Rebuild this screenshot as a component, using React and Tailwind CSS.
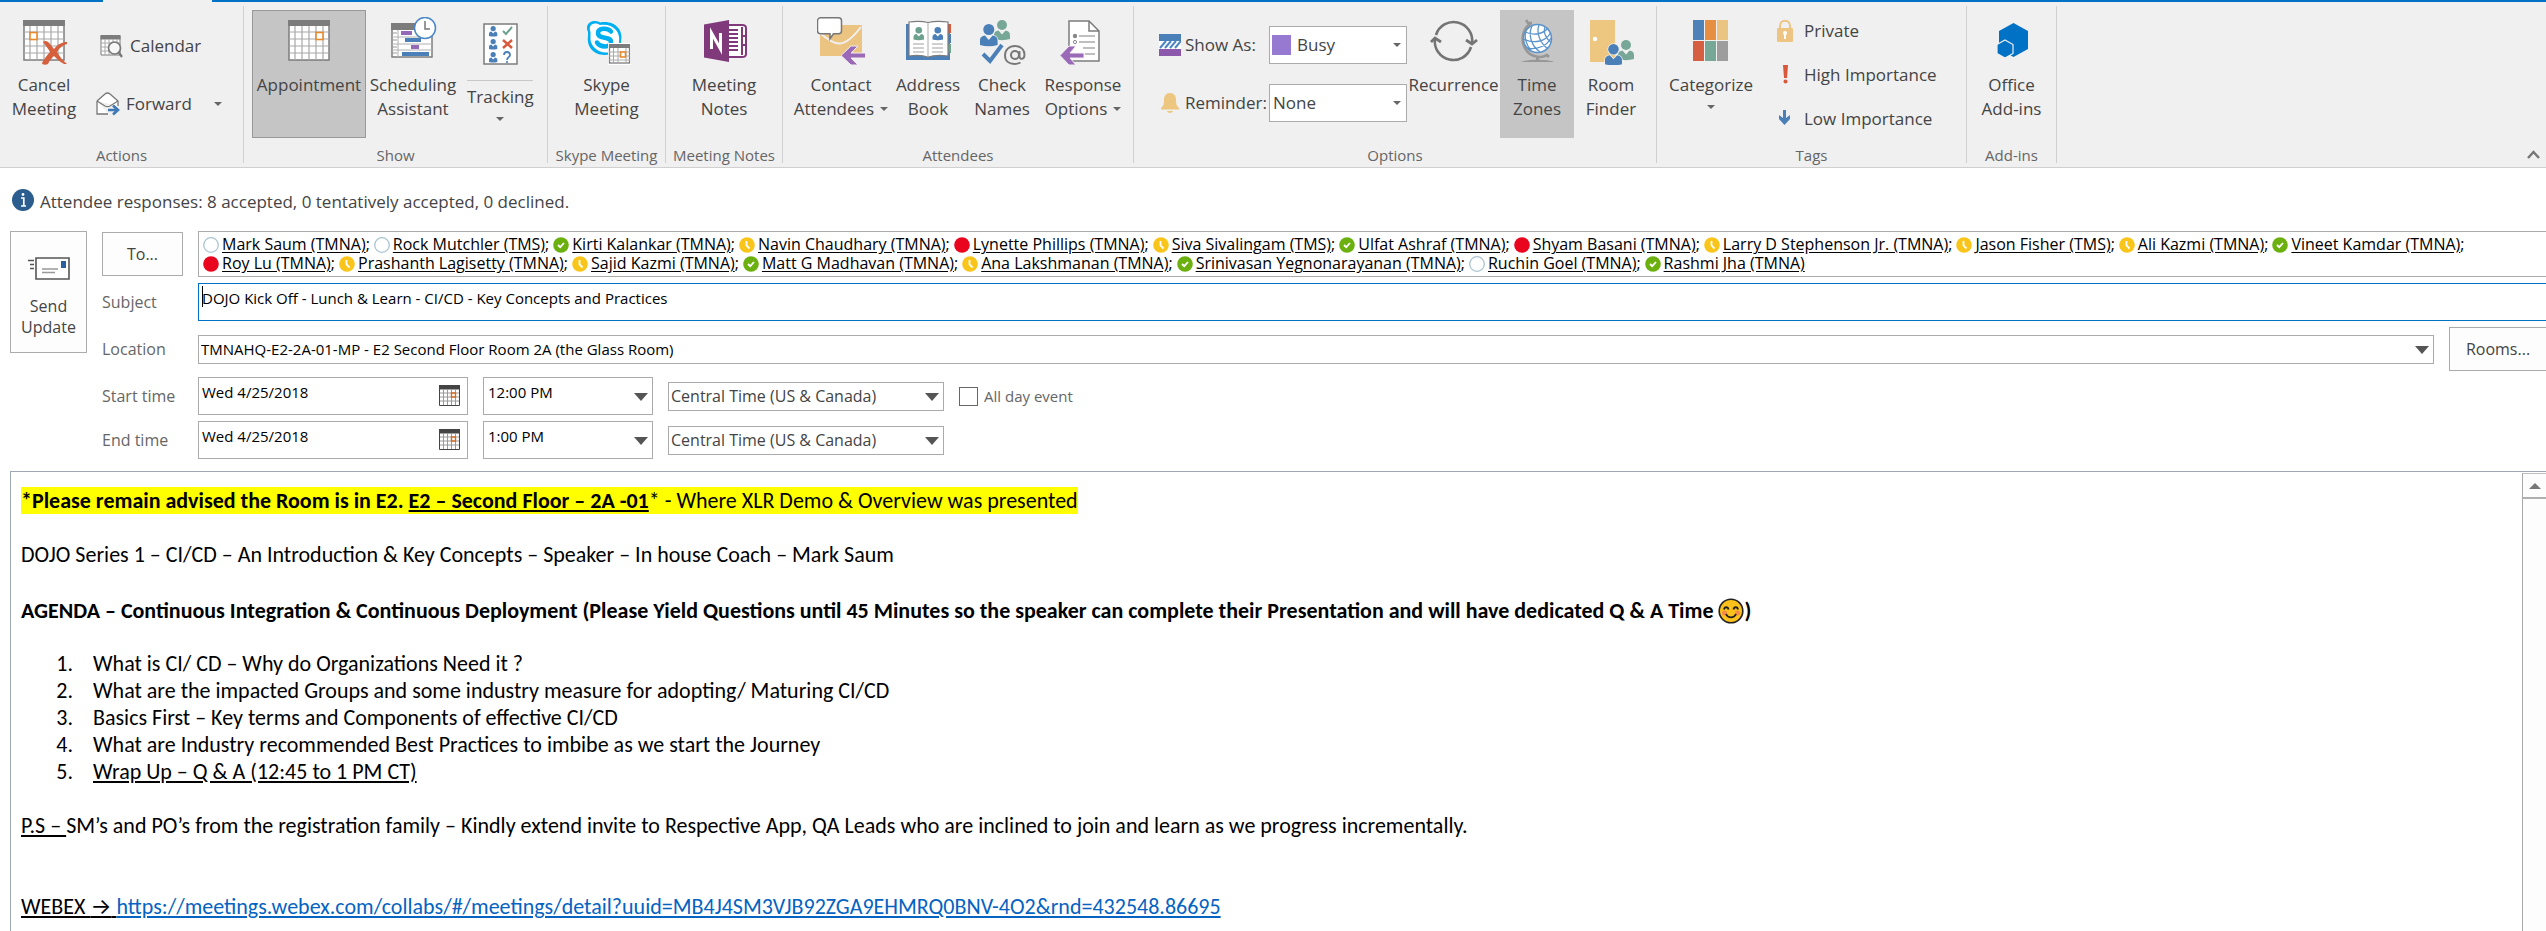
import React from "react";

const BIG = "h-12 w-12 shrink-0";

function Caret({ className = "" }) {
  return (
    <svg className={`h-1 w-2 shrink-0 ${className}`} viewBox="0 0 8 4" aria-hidden="true">
      <path d="M0 0h8L4 4z" fill="#666" />
    </svg>
  );
}

function Triangle({ className = "" }) {
  return (
    <svg className={`h-2 w-[14px] shrink-0 ${className}`} viewBox="0 0 14 8" aria-hidden="true">
      <path d="M0 0h14L7 8z" fill="#555" />
    </svg>
  );
}

function GridCalendar({ x, y, markX }) {
  return (
    <g>
      <rect x={x + 1} y={y + 1} width="40" height="39" fill="#fff" stroke="#7c7c7c" strokeWidth="1.5" />
      <rect x={x} y={y} width="42" height="6" fill="#7c7c7c" />
      <path
        d={`M${x + 7} ${y + 6}v34M${x + 14} ${y + 6}v34M${x + 21} ${y + 6}v34M${x + 28} ${y + 6}v34M${x + 35} ${y + 6}v34M${x + 1} ${y + 12}h40M${x + 1} ${y + 19}h40M${x + 1} ${y + 26}h40M${x + 1} ${y + 33}h40`}
        stroke="#a8a8a8"
        strokeWidth="1.2"
      />
      <rect x={x + markX} y={y + 12.5} width="7" height="7" fill="#fff" stroke="#e68a2e" strokeWidth="1.6" />
    </g>
  );
}

function Person({ x, y, s = 1, fill, halo }) {
  return (
    <g transform={`translate(${x} ${y}) scale(${s})`} fill={fill} stroke={halo || "none"} strokeWidth={halo ? 1.4 : 0} paintOrder="stroke">
      <circle cx="8" cy="5" r="5" />
      <path d="M0 19v-4c0-3 2-4 4.500-4.500L8 14.500l3.500-4C14 11 16 12 16 15v4c-5 1.500-11 1.500-16 0z" />
    </g>
  );
}

const CancelIcon = () => (
  <svg className={BIG} viewBox="0 0 48 48" aria-hidden="true">
    <GridCalendar x={3} y={3} markX={7} />
    <path d="M23 25c2-2 5-1 7 2l4 5c4-5 8-7 13-7v2c-4 1-8 4-10 8 3 5 6 9 10 12h-3c-4-2-7-5-10-8-3 3-5 5-6 8-2 1-6 1-6-1 2-4 5-8 8-11-2-4-5-7-7-10z" fill="#d65f3e" />
  </svg>
);
const AppointmentIcon = () => (
  <svg className={BIG} viewBox="0 0 48 48" aria-hidden="true">
    <GridCalendar x={3} y={3} markX={28} />
  </svg>
);
const SchedulingIcon = () => (
  <svg className={BIG} viewBox="0 0 48 48" aria-hidden="true">
    <rect x="3" y="7" width="40" height="33" fill="#fff" stroke="#7c7c7c" strokeWidth="1.500" />
    <rect x="2" y="6" width="24" height="7" fill="#7c7c7c" />
    <path d="M9 13v27M3 20h40M3 27h40M3 33h40" stroke="#b0b0b0" />
    <path d="M4 16h4M4 23h4M4 30h4M4 36h4" stroke="#999" />
    <rect x="12" y="14" width="11" height="4" fill="#9668b8" />
    <rect x="16" y="21" width="16" height="4" fill="#4a7fb8" />
    <rect x="22" y="28" width="8" height="4" fill="#9668b8" />
    <rect x="13" y="35" width="27" height="4" fill="#4a7fb8" />
    <circle cx="36" cy="11" r="10.500" fill="#fff" stroke="#4a85c4" strokeWidth="1.500" />
    <path d="M36 4v8h5" fill="none" stroke="#777" strokeWidth="1.500" />
  </svg>
);
const TrackingIcon = () => (
  <svg className={BIG} viewBox="0 0 48 48" aria-hidden="true">
    <rect x="8" y="7" width="33" height="40" fill="#fff" stroke="#7c7c7c" strokeWidth="1.500" />
    {[9, 22, 35].map((y) => (
      <Person key={y} x={13} y={y} s={0.52} fill="#4a7fb8" />
    ))}
    <path d="M27 14l3 3 6-7" fill="none" stroke="#6ba18d" strokeWidth="2" />
    <path d="M27 23l9 8M36 23l-9 8" stroke="#d9573a" strokeWidth="2.400" />
    <path d="M28 38c0-4 6-4 6 0 0 2-3 2.500-3 5" fill="none" stroke="#4a7fb8" strokeWidth="1.800" />
    <circle cx="31" cy="45" r="1.100" fill="#4a7fb8" />
  </svg>
);
const SkypeIcon = () => (
  <svg className={BIG} viewBox="0 0 48 48" aria-hidden="true">
    <path d="M5 15C2 9 6 4 11 4c3 0 5 .5 6 1.500C31 3 41 12 38 25c3 7-3 15-10 12C14 41 3 32 5 19z" fill="#00aff0" />
    <path d="M7.500 15C5.500 10 8 6.500 12 6.500c2 0 4 .6 5 1.500C29 6 38 14 36 25c2 5-2 11-8 10C16 38 6 29 7.500 19z" fill="#fff" />
    <path d="M28 14.500c-3-4-13-4-13 1.500 0 7 13 2.500 13 9 0 6-11 5.500-14 .5" fill="none" stroke="#00aff0" strokeWidth="4.500" strokeLinecap="round" />
    <rect x="25" y="26" width="23" height="22" fill="#fff" />
    <rect x="26.500" y="28" width="20" height="18" fill="#fff" stroke="#7c7c7c" strokeWidth="1.300" />
    <rect x="26" y="27" width="21" height="4" fill="#7c7c7c" />
    <path d="M30.500 31v15M35 31v15M43 31v15M26 35h21M26 39h21M26 43h21" stroke="#aaa" />
    <rect x="37.500" y="35" width="5" height="5" fill="#fff" stroke="#e68a2e" strokeWidth="1.600" />
  </svg>
);
const OneNoteIcon = () => (
  <svg className={BIG} viewBox="0 0 48 48" aria-hidden="true">
    <path d="M26 8h16c3 0 4 1 4 3v26c0 2-1 3-4 3H26z" fill="#fff" stroke="#80397b" strokeWidth="2" />
    <path d="M42 10v28M42 19h4M42 28h4" stroke="#80397b" strokeWidth="2" />
    <path d="M29 13h9M29 17h9M29 21h9M29 25h9M29 29h9M29 33h9" stroke="#80397b" strokeWidth="1.800" />
    <path d="M4 7.500L29 3v42L4 40.500z" fill="#80397b" />
    <path d="M11.500 32V16l9 16V16" fill="none" stroke="#fff" strokeWidth="3" />
  </svg>
);
const ContactIcon = () => (
  <svg className={BIG} viewBox="0 0 48 48" aria-hidden="true">
    <rect x="3" y="8" width="42" height="31" fill="#ebc482" />
    <path d="M3 16c16 14 24 16 41-6" fill="none" stroke="#f0f0f0" strokeWidth="2" />
    <path d="M3 .800h18c2 0 3 1.500 3 3v10c0 2-1.500 3-3 3h-5l-3.500 5V16.800H3c-1.500 0-3-1-3-3v-10c0-1.500 1.500-3 3-3z" transform="translate(.5 0)" fill="#fff" stroke="#777" strokeWidth="1.500" />
    <path d="M24 38.500L34 29h7l-7 7h15v5H34l7 7h-7z" fill="#9a6ab8" stroke="#f0f0f0" strokeWidth="1" />
  </svg>
);
const AddressIcon = () => (
  <svg className={BIG} viewBox="0 0 48 48" aria-hidden="true">
    <path d="M2 7h44v36H2z" fill="#4a7fb8" />
    <path d="M43 7h4v9h-4z" fill="#d9573a" />
    <path d="M43 17h4v9h-4z" fill="#4a7fb8" />
    <path d="M43 27h4v9h-4z" fill="#6ba18d" />
    <path d="M5 5c7-1 13-1 19 .5C30 4 37 4 44 5v34c-7-1-14-1-20 1-6-2-12-2-19-1z" fill="#fff" stroke="#7c7c7c" strokeWidth="1.200" />
    <path d="M24 6v34" stroke="#aaa" />
    <Person x={9.500} y={10} s={0.66} fill="#6ba18d" />
    <Person x={28.500} y={10} s={0.66} fill="#4a7fb8" />
    <path d="M9 27h11M9 31h11M9 35h11M28 27h11M28 31h11M28 35h11" stroke="#a0a0a0" strokeWidth="1.200" />
  </svg>
);
const CheckNamesIcon = () => (
  <svg className={BIG} viewBox="0 0 48 48" aria-hidden="true">
    <Person x={16} y={3} fill="#77a797" />
    <Person x={2} y={7} s={1.100} fill="#4a7fb8" halo="#f0f0f0" />
    <path d="M5 37l7 7 12-16" fill="none" stroke="#4a7fb8" strokeWidth="4" />
    <circle cx="37" cy="38" r="4" fill="none" stroke="#777" strokeWidth="2" />
    <path d="M41.500 34v5c0 4 5 4 5-1.500 0-5-4-8.500-9.500-8.500-6 0-10 4-10 9.500s4 8.500 9.500 8.500c2.500 0 4-.5 6-1.500" fill="none" stroke="#777" strokeWidth="1.900" />
  </svg>
);
const ResponseIcon = () => (
  <svg className={BIG} viewBox="0 0 48 48" aria-hidden="true">
    <path d="M10 4h20l10 10v30H10z" fill="#fff" stroke="#7c7c7c" strokeWidth="1.500" />
    <path d="M30 4v10h10" fill="none" stroke="#7c7c7c" strokeWidth="1.500" />
    <circle cx="16" cy="19" r="2.200" fill="#888" />
    <circle cx="16" cy="25" r="1.600" fill="none" stroke="#888" />
    <path d="M20 19h16M20 25h16M24 31h12M26 37h10" stroke="#aaa" strokeWidth="1.300" />
    <path d="M1 38.500L10 29h7l-6 7h14v5H11l6 7h-7z" fill="#9a6ab8" stroke="#f0f0f0" strokeWidth="1" />
  </svg>
);
const RecurrenceIcon = () => (
  <svg className={BIG} viewBox="0 0 48 48" aria-hidden="true">
    <path d="M6 18a18.500 18.500 0 0 1 36 8M41 30a18.500 18.500 0 0 1-36-8" fill="none" stroke="#747474" strokeWidth="2.600" />
    <path d="M1 25l4-4 6 4M36 23l6 4 5-4" fill="none" stroke="#747474" strokeWidth="2.800" />
  </svg>
);
const GlobeIcon = () => (
  <svg className={BIG} viewBox="0 0 48 48" aria-hidden="true">
    <path d="M14 5l3 2c-12 8-10 33 11 33 2 0 4-1 6-2l2 2M13 3l2 3 4 0" fill="none" stroke="#979797" strokeWidth="2.600" />
    <circle cx="24.500" cy="21.500" r="14" fill="#fff" stroke="#5b93cb" strokeWidth="1.500" />
    <path d="M12 15c9 4 18 2 23-4M10.500 22c10 5 22 3 27-6M14 31c10 2 20-2 24-10M19 9c-4 8-1 20 8 26M26 8c-3 8 1 18 9 24M32 10c-2 5 1 12 6 15M13 14c-2 6 0 14 5 19" fill="none" stroke="#5b93cb" strokeWidth="1.300" />
    <path d="M24.500 39v4" stroke="#979797" strokeWidth="3" />
    <path d="M8 45c5-3 28-3 33 0z" fill="#979797" />
  </svg>
);
const RoomIcon = () => (
  <svg className={BIG} viewBox="0 0 48 48" aria-hidden="true">
    <rect x="3" y="3" width="25" height="42" fill="#edc77f" />
    <circle cx="8" cy="22" r="2.200" fill="#fff" />
    <Person x={31} y={23} fill="#77a797" halo="#f0f0f0" />
    <Person x={18} y={27} s={1.060} fill="#4a7fb8" halo="#f0f0f0" />
  </svg>
);
const CategorizeIcon = () => (
  <svg className={BIG} viewBox="0 0 48 48" aria-hidden="true">
    <path d="M6 3h11v20H6z" fill="#4e81b8" />
    <path d="M18 3h11v20H18z" fill="#e68f43" />
    <path d="M30 3h11v20H30z" fill="#ebc482" />
    <path d="M6 24h11v20H6z" fill="#d65f42" />
    <path d="M18 24h11v20H18z" fill="#77a797" />
    <path d="M30 24h11v20H30z" fill="#9d9d9d" />
  </svg>
);
const AddinsIcon = () => (
  <svg className={BIG} viewBox="0 0 48 48" aria-hidden="true">
    <path d="M25.500 6L40 14v18L25.500 40 11 32V14z" fill="#0072c6" />
    <path d="M17 23l8 4.500v9L17 41l-8-4.500v-9z" fill="#0072c6" stroke="#f0f0f0" strokeWidth="1.200" />
  </svg>
);

const CalendarSearchIcon = () => (
  <svg className="h-6 w-6 shrink-0" viewBox="0 0 24 24" aria-hidden="true">
    <path d="M1 2h19v19H1z" fill="#fff" stroke="#7c7c7c" />
    <path d="M.500 1h20v4.500h-20z" fill="#7c7c7c" />
    <path d="M5 5v16M9 5v16M13 5v16M17 5v16M1 9h19M1 13h19M1 17h19" stroke="#aaa" />
    <circle cx="14.500" cy="14" r="6" fill="#f7f7f7" stroke="#777" strokeWidth="1.700" />
    <path d="M18.500 18l3.500 5" stroke="#777" strokeWidth="2.200" />
  </svg>
);
const ForwardIcon = () => (
  <svg className="h-6 w-6 shrink-0" viewBox="0 0 24 24" aria-hidden="true">
    <path d="M1 9L9 2c2-1.600 3-1.600 5 0l8 7v5M12 22H1V9" fill="#fff" stroke="#777" strokeWidth="1.300" />
    <path d="M1 9l8 5c2 1 3 1 5 0l8-5" fill="none" stroke="#777" strokeWidth="1.200" />
    <path d="M12 18h8M17 13.500l5 4.500-5 4.500" fill="none" stroke="#3e78b5" strokeWidth="2.600" />
  </svg>
);
const ShowAsIcon = () => (
  <svg className="h-[22px] w-[22px] shrink-0" viewBox="0 0 22 22" aria-hidden="true">
    <path d="M0 0h22v22H0z" fill="#fff" />
    <path d="M0 0h22v7H0z" fill="#4a7fb8" />
    <path d="M1 14l6-7M6 14l6-7M11 14l6-7M16 14l6-7" stroke="#4a85c4" strokeWidth="2" />
    <path d="M0 15h22v7H0z" fill="#8b58ab" />
  </svg>
);
const BellIcon = () => (
  <svg className="h-[22px] w-[22px] shrink-0" viewBox="0 0 22 22" aria-hidden="true">
    <path d="M11 1c4 0 6 3 6 7 0 5 1 6 3 8v1.500H2V16c2-2 3-3 3-8 0-4 2-7 6-7zM8 19h6c-.5 2.500-5.500 2.500-6 0z" fill="#edc77f" />
  </svg>
);
const LockIcon = () => (
  <svg className="h-6 w-5 shrink-0" viewBox="0 0 20 24" aria-hidden="true">
    <path d="M5 10V7c0-7 10-7 10 0v3" fill="none" stroke="#edc482" strokeWidth="2" />
    <rect x="2" y="9" width="16" height="14" rx="1" fill="#edc482" />
    <path d="M10 14v6" stroke="#fff" strokeWidth="2" />
    <circle cx="10" cy="14" r="2" fill="#fff" />
  </svg>
);
const HighIcon = () => (
  <svg className="h-6 w-5 shrink-0" viewBox="0 0 20 24" aria-hidden="true">
    <path d="M8 2h5l-1 13H9z" fill="#d9573a" />
    <circle cx="10.500" cy="18.500" r="2" fill="#d9573a" />
  </svg>
);
const LowIcon = () => (
  <svg className="h-6 w-5 shrink-0" viewBox="0 0 20 24" aria-hidden="true">
    <path d="M8 3h3v8l4-3v4l-5.500 6L4 12V8l4 3z" fill="#4a7fb8" />
  </svg>
);

function BigButton({ icon, lines, width, caret, active, className = "" }) {
  return (
    <button type="button" className={`flex h-32 shrink-0 flex-col items-center pt-[7px] ${width} ${active ? "bg-[#c5c5c5]" : ""} ${className}`}>
      {icon}
      <span className="mt-2 flex flex-col items-center whitespace-nowrap text-[17px] leading-6">
        <span>{lines[0]}</span>
        <span className="flex h-6 items-center gap-[6px]">
          {lines[1]}
          {caret && <Caret />}
        </span>
      </span>
    </button>
  );
}

function Group({ title, width, row = "justify-center", children }) {
  return (
    <section className={`my-1 flex h-[157px] shrink-0 flex-col border-r border-[#d0d0d0] ${width}`}>
      <div className={`mt-1 flex h-32 items-start ${row}`}>{children}</div>
      <h2 className="mt-1 text-center text-[15px] leading-[26px] whitespace-nowrap text-[#666]">{title}</h2>
    </section>
  );
}

function Ribbon() {
  return (
    <header className="border-b border-[#d0d0d0] bg-[#f0f0f0]">
      <div className="flex h-[2px]">
        <div className="w-[103px] bg-[#0072c6]" />
        <div className="w-[109px]" />
        <div className="flex-1 bg-[#0072c6]" />
      </div>
      <div className="flex">
        <Group title="Actions" width="w-[244px]" row="pl-1">
          <BigButton icon={<CancelIcon />} lines={["Cancel", "Meeting"]} width="w-20" />
          <div className="ml-3 flex w-32 flex-col gap-[34px] pt-6 text-[17px] leading-6">
            <button type="button" className="flex items-center gap-[6px] pl-1">
              <CalendarSearchIcon />
              Calendar
            </button>
            <button type="button" className="flex items-center gap-[6px]">
              <ForwardIcon />
              Forward
              <Caret className="mr-[2px] ml-auto" />
            </button>
          </div>
        </Group>
        <Group title="Show" width="w-[304px]" row="pl-2">
          <BigButton icon={<AppointmentIcon />} lines={["Appointment"]} width="w-[114px]" active className="border border-[#999] !pt-[6px]" />
          <BigButton icon={<SchedulingIcon />} lines={["Scheduling", "Assistant"]} width="w-[94px]" />
          <button type="button" className="flex h-32 w-20 flex-col items-center pt-[7px] text-[17px] leading-6">
            <TrackingIcon />
            <span className="mt-[15px] w-[66px] border-t border-[#c8c8c8] pt-1">Tracking</span>
            <Caret className="mt-2" />
          </button>
        </Group>
        <Group title="Skype Meeting" width="w-[118px]">
          <BigButton icon={<SkypeIcon />} lines={["Skype", "Meeting"]} width="w-24" />
        </Group>
        <Group title="Meeting Notes" width="w-[117px]">
          <BigButton icon={<OneNoteIcon />} lines={["Meeting", "Notes"]} width="w-24" />
        </Group>
        <Group title="Attendees" width="w-[351px]" row="pl-1">
          <BigButton icon={<ContactIcon />} lines={["Contact", "Attendees"]} width="w-[108px]" caret />
          <BigButton icon={<AddressIcon />} lines={["Address", "Book"]} width="w-[66px]" />
          <BigButton icon={<CheckNamesIcon />} lines={["Check", "Names"]} width="w-[82px]" />
          <BigButton icon={<ResponseIcon />} lines={["Response", "Options"]} width="w-20" caret />
        </Group>
        <Group title="Options" width="w-[523px]" row="pl-[25px]">
          <div className="mt-4 grid grid-cols-[26px_84px_138px] items-center gap-y-5 text-[17px] leading-6">
            <ShowAsIcon />
            <label htmlFor="show-as">Show As:</label>
            <div className="relative">
              <span className="absolute top-[9px] left-[3px] h-5 w-[19px] bg-[#967ad2]" />
              <select id="show-as" className="h-[38px] w-full appearance-none border border-[#ababab] bg-white pl-[27px]">
                <option>Busy</option>
              </select>
              <Caret className="pointer-events-none absolute top-[17px] right-[6px]" />
            </div>
            <BellIcon />
            <label htmlFor="reminder">Reminder:</label>
            <div className="relative">
              <select id="reminder" className="h-[38px] w-full appearance-none border border-[#ababab] bg-white pl-[3px]">
                <option>None</option>
              </select>
              <Caret className="pointer-events-none absolute top-[17px] right-[6px]" />
            </div>
          </div>
          <BigButton icon={<RecurrenceIcon />} lines={["Recurrence"]} width="w-[93px]" />
          <BigButton icon={<GlobeIcon />} lines={["Time", "Zones"]} width="w-[74px]" active />
          <BigButton icon={<RoomIcon />} lines={["Room", "Finder"]} width="w-[74px]" />
        </Group>
        <Group title="Tags" width="w-[310px]" row="pl-[6px]">
          <button type="button" className="flex h-32 w-24 flex-col items-center pt-[7px] text-[17px] leading-6">
            <CategorizeIcon />
            <span className="mt-2">Categorize</span>
            <Caret className="mt-2" />
          </button>
          <div className="ml-4 flex w-44 flex-col gap-5 pt-[9px] text-[17px] leading-6">
            <button type="button" className="flex items-center gap-[9px]"><LockIcon />Private</button>
            <button type="button" className="flex items-center gap-[9px]"><HighIcon />High Importance</button>
            <button type="button" className="flex items-center gap-[9px]"><LowIcon />Low Importance</button>
          </div>
        </Group>
        <Group title="Add-ins" width="w-[90px]">
          <BigButton icon={<AddinsIcon />} lines={["Office", "Add-ins"]} width="w-20" />
        </Group>
        <button type="button" aria-label="Collapse the ribbon" className="mr-[2px] mb-1 ml-auto self-end p-1">
          <svg className="h-[9px] w-[13px]" viewBox="0 0 13 9" aria-hidden="true">
            <path d="M1 8l5.500-6L12 8" fill="none" stroke="#777" strokeWidth="2.500" />
          </svg>
        </button>
      </div>
    </header>
  );
}

const ATTENDEES = [
  ["Mark Saum (TMNA)", "none"],
  ["Rock Mutchler (TMS)", "none"],
  ["Kirti Kalankar (TMNA)", "free"],
  ["Navin Chaudhary (TMNA)", "away"],
  ["Lynette Phillips (TMNA)", "busy"],
  ["Siva Sivalingam (TMS)", "away"],
  ["Ulfat Ashraf (TMNA)", "free"],
  ["Shyam Basani (TMNA)", "busy"],
  ["Larry D Stephenson Jr. (TMNA)", "away"],
  ["Jason Fisher (TMS)", "away"],
  ["Ali Kazmi (TMNA)", "away"],
  ["Vineet Kamdar (TMNA)", "free"],
  ["Roy Lu (TMNA)", "busy"],
  ["Prashanth Lagisetty (TMNA)", "away"],
  ["Sajid Kazmi (TMNA)", "away"],
  ["Matt G Madhavan (TMNA)", "free"],
  ["Ana Lakshmanan (TMNA)", "away"],
  ["Srinivasan Yegnonarayanan (TMNA)", "free"],
  ["Ruchin Goel (TMNA)", "none"],
  ["Rashmi Jha (TMNA)", "free"],
];

const PRESENCE = { none: "#fff", free: "#6bb00f", away: "#f9c51a", busy: "#e9051d" };

function Presence({ state }) {
  return (
    <svg className="mr-[3px] h-4 w-4 shrink-0" viewBox="0 0 16 16" aria-hidden="true">
      <circle cx="8" cy="8" r={state === "none" ? 7.3 : 7.8} fill={PRESENCE[state]} stroke={state === "none" ? "#a9c4d0" : "none"} strokeWidth="1.300" />
      {state === "free" && <path d="M5 8l2.200 2.200L11 6" fill="none" stroke="#fff" strokeWidth="1.800" />}
      {state === "away" && <path d="M7.500 4v4.500l3 3" fill="none" stroke="#fff" strokeWidth="1.800" />}
    </svg>
  );
}

function DateField({ id, label }) {
  return (
    <div className="relative w-[270px]">
      <input id={id} aria-label={label} defaultValue="Wed 4/25/2018" className="block h-[38px] w-full border border-[#ababab] bg-white pb-2 pl-[3px] text-[15px] text-black outline-none" />
      <button type="button" aria-label={`Pick ${label}`} className="absolute top-[8px] right-2">
        <svg className="h-[21px] w-[21px]" viewBox="0 0 21 21" aria-hidden="true">
          <path d="M.500 1h20v19.500H.500z" fill="#fff" stroke="#444" />
          <path d="M0 0h21v4.500H0z" fill="#444" />
          <path d="M4.500 4v16M8.500 4v16M12.500 4v16M16.500 4v16M1 8h19M1 12h19M1 16h19" stroke="#999" />
          <path d="M12.500 8h4v4h-4z" fill="#fff" stroke="#d2691e" strokeWidth="1.400" />
        </svg>
      </button>
    </div>
  );
}

function SelectField({ label, value, width, box, caret }) {
  return (
    <div className={`relative ${width}`}>
      <select aria-label={label} className={`block w-full appearance-none border border-[#ababab] bg-white ${box}`}>
        <option>{value}</option>
      </select>
      <Triangle className={`pointer-events-none absolute right-[5px] ${caret}`} />
    </div>
  );
}

function TimeRow({ name, time, children }) {
  const id = name.toLowerCase().replace(" ", "-");
  return (
    <div className="flex h-[38px] items-center">
      <label htmlFor={id} className="w-24 text-[#666]">{name}</label>
      <DateField id={id} label={`${name} date`} />
      <div className="ml-[15px]">
        <SelectField label={`${name} of day`} value={time} width="w-[170px]" box="h-[38px] pb-2 pl-1 text-[15px] text-black" caret="top-[16px]" />
      </div>
      <div className="ml-[15px]">
        <SelectField label={`${name} zone`} value="Central Time (US &amp; Canada)" width="w-[276px]" box="h-[29px] pl-[2px] text-[16px] text-[#444]" caret="top-[11px]" />
      </div>
      {children}
    </div>
  );
}

function MeetingForm() {
  return (
    <div className="flex gap-[15px] pl-[10px] text-[16px] leading-[19px]">
      <button type="button" className="flex h-[122px] w-[77px] shrink-0 flex-col items-center border border-[#ababab] bg-[#fdfdfd] pt-[25px] text-[16px] leading-[21px] text-[#444]">
        <svg className="h-[23px] w-[42px]" viewBox="0 0 42 23" aria-hidden="true">
          <path d="M8 1h33v21H8z" fill="#fff" stroke="#555" strokeWidth="1.600" />
          <path d="M33 4h5v7h-5z" fill="#2b5f9e" />
          <path d="M14 12h16M14 15.500h13" stroke="#999" strokeWidth="1.300" />
          <path d="M0 3.500h6M2 7.500h4M2 11.500h4" stroke="#555" strokeWidth="1.500" />
        </svg>
        <span className="mt-4">Send</span>
        <span>Update</span>
      </button>
      <div className="min-w-0 flex-1">
        <div className="flex">
          <div className="w-24 shrink-0 pt-px">
            <button type="button" className="h-11 w-[81px] border border-[#ababab] bg-[#fdfdfd] text-[#444]">To...</button>
          </div>
          <div role="textbox" aria-label="To" className="h-[46px] flex-1 overflow-hidden border border-r-0 border-[#ababab] pt-[3px] pl-1 text-black">
            {[ATTENDEES.slice(0, 12), ATTENDEES.slice(12)].map((row, r) => (
              <div key={r} className="flex gap-1 whitespace-nowrap">
                {row.map(([name, state], i) => (
                  <span key={name} className="flex items-center">
                    <Presence state={state} />
                    <span className="underline underline-offset-2">{name}</span>
                    {!(r === 1 && i === row.length - 1) && ";"}
                  </span>
                ))}
              </div>
            ))}
          </div>
        </div>
        <div className="mt-[6px] flex items-center">
          <label htmlFor="subject" className="w-24 shrink-0 text-[#666]">Subject</label>
          <div className="relative flex-1">
            <input id="subject" defaultValue="DOJO Kick Off - Lunch &amp; Learn - CI/CD - Key Concepts and Practices" className="block h-[38px] w-full border border-r-0 border-[#0072c6] bg-white pb-2 pl-[3px] text-[15px] text-black outline-none" />
            <span className="absolute top-[3px] left-1 h-[21px] w-px bg-black" />
          </div>
        </div>
        <div className="mt-[6px] flex items-center">
          <label htmlFor="location" className="w-24 shrink-0 text-[#666]">Location</label>
          <div className="relative flex-1">
            <input id="location" defaultValue="TMNAHQ-E2-2A-01-MP - E2 Second Floor Room 2A (the Glass Room)" className="block h-[29px] w-full border border-[#ababab] bg-white pl-[2px] text-[15px] text-black outline-none" />
            <Triangle className="pointer-events-none absolute top-[11px] right-[5px]" />
          </div>
          <button type="button" className="ml-[15px] h-11 w-[97px] border border-r-0 border-[#ababab] bg-[#fdfdfd] text-[#444]">Rooms...</button>
        </div>
        <div className="mt-[6px] flex flex-col gap-[6px]">
          <TimeRow name="Start time" time="12:00 PM">
            <label className="ml-[15px] flex items-center gap-[6px] text-[15px] text-[#666]">
              <input type="checkbox" className="h-[19px] w-[19px] appearance-none border border-[#666] bg-white" />
              All day event
            </label>
          </TimeRow>
          <TimeRow name="End time" time="1:00 PM" />
        </div>
      </div>
    </div>
  );
}

function Smile() {
  return (
    <svg className="inline-block h-[26px] w-[26px] align-[-6px]" viewBox="0 0 26 26" role="img" aria-label="Smiling face">
      <circle cx="13" cy="13" r="11.800" fill="#fcc21b" stroke="#222" strokeWidth="1.600" />
      <circle cx="6.500" cy="15" r="2.500" fill="#f7894a" />
      <circle cx="19.500" cy="15" r="2.500" fill="#f7894a" />
      <path d="M6 11.500c.5-3 4-3 4.500 0M15.500 11.500c.5-3 4-3 4.500 0M8 16c2 4.500 8 4.500 10 0" fill="none" stroke="#222" strokeWidth="1.800" />
    </svg>
  );
}

function MessageBody() {
  const agenda = [
    "What is CI/ CD – Why do Organizations Need it ?",
    "What are the impacted Groups and some industry measure for adopting/ Maturing CI/CD",
    "Basics First – Key terms and Components of effective CI/CD",
    "What are Industry recommended Best Practices to imbibe as we start the Journey",
  ];
  const url = "https://meetings.webex.com/collabs/#/meetings/detail?uuid=MB4J4SM3VJB92ZGA9EHMRQ0BNV-4O2&rnd=432548.86695";
  return (
    <main className="mt-3 ml-[10px] flex flex-1 border-t border-l border-[#a0a8b4]">
      <div className="flex-1 pt-[15px] pl-[10px] font-[Carlito,Lato,sans-serif] text-[22px] leading-[27px] text-black">
        <p>
          <mark className="inline-block bg-[#ffff00] text-black">
            <b>
              *Please remain advised the Room is in E2. <u className="underline-offset-2">E2 – Second Floor – 2A -01</u>
            </b>
            * - Where XLR Demo &amp; Overview was presented
          </mark>
        </p>
        <p className="mt-[27px]">DOJO Series 1 – CI/CD – An Introduction &amp; Key Concepts – Speaker – In house Coach – Mark Saum</p>
        <p className="mt-7 leading-[29px] font-bold">
          AGENDA – Continuous Integration &amp; Continuous Deployment (Please Yield Questions until 45 Minutes so the speaker can complete their Presentation and will have dedicated Q &amp; A Time <Smile />)
        </p>
        <ol className="mt-[25px] list-decimal pl-[57px] [&>li]:pl-[15px]">
          {agenda.map((item) => (
            <li key={item}>{item}</li>
          ))}
          <li>
            <u className="underline-offset-2">Wrap Up – Q &amp; A (12:45 to 1 PM CT)</u>
          </li>
        </ol>
        <p className="mt-[27px]">
          <u className="underline-offset-2">P.S – </u>SM’s and PO’s from the registration family – Kindly extend invite to Respective App, QA Leads who are inclined to join and learn as we progress incrementally.
        </p>
        <p className="mt-[54px]">
          <u className="underline-offset-2">WEBEX <span className="font-[Inter]">→</span> </u>
          <a href={url} className="text-[#0563c1] underline underline-offset-2">{url}</a>
        </p>
      </div>
      <div className="mt-px flex w-6 flex-col border-l border-[#a8a8a8] bg-[#fdfdfd]">
        <button type="button" aria-label="Scroll up" className="flex h-[26px] items-center justify-center border-t border-b-2 border-t-[#c0c0c0] border-b-[#b0b0b0]">
          <svg className="h-[6px] w-3" viewBox="0 0 12 6" aria-hidden="true">
            <path d="M6 0l6 6H0z" fill="#777" />
          </svg>
        </button>
      </div>
    </main>
  );
}

export default function App() {
  return (
    <div className="flex min-h-screen flex-col overflow-x-hidden bg-white font-['Open_Sans','Noto_Sans',sans-serif] text-[#444]">
      <Ribbon />
      <div className="flex h-[63px] items-center gap-[6px] pt-[5px] pl-[12px] text-[17px] leading-6">
        <svg className="mb-1 h-[22px] w-[22px]" viewBox="0 0 22 22" aria-hidden="true">
          <circle cx="11" cy="11" r="11" fill="#2b5d8f" />
          <circle cx="11" cy="5.500" r="1.400" fill="#fff" />
          <path d="M9 9h2.800v8M9 17h5" fill="none" stroke="#fff" strokeWidth="1.700" />
        </svg>
        <p>Attendee responses: 8 accepted, 0 tentatively accepted, 0 declined.</p>
      </div>
      <MeetingForm />
      <MessageBody />
    </div>
  );
}
